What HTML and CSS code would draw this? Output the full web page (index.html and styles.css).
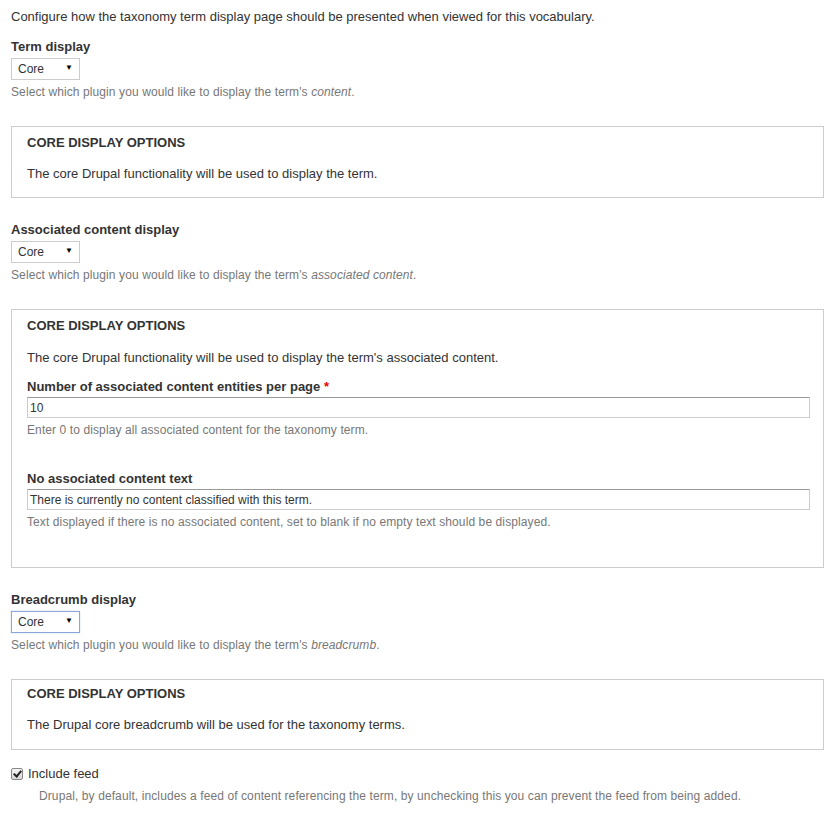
FILE: index.html
```html
<!DOCTYPE html>
<html lang="en">
<head>
  <meta charset="UTF-8" />
  <title>Taxonomy display</title>
  <link rel="stylesheet" href="styles.css">
</head>
<body>
  <div class="page">
    <p class="intro">Configure how the taxonomy term display page should be presented when viewed for this vocabulary.</p>

    <div class="form-item">
      <label for="term-display">Term display</label>
      <span class="select-wrap">
        <select id="term-display"><option>Core</option></select>
      </span>
      <div class="description">Select which plugin you would like to display the term's <em>content</em>.</div>
    </div>

    <fieldset class="fieldset">
      <div class="legend">Core display options</div>
      <p class="fieldset-text">The core Drupal functionality will be used to display the term.</p>
    </fieldset>

    <div class="form-item">
      <label for="assoc-display">Associated content display</label>
      <span class="select-wrap">
        <select id="assoc-display"><option>Core</option></select>
      </span>
      <div class="description">Select which plugin you would like to display the term's <em>associated content</em>.</div>
    </div>

    <fieldset class="fieldset fieldset-tall">
      <div class="legend">Core display options</div>
      <p class="fieldset-text">The core Drupal functionality will be used to display the term's associated content.</p>

      <div class="form-item inner">
        <label for="per-page">Number of associated content entities per page <span class="required">*</span></label>
        <input type="text" id="per-page" class="text" value="10">
        <div class="description">Enter 0 to display all associated content for the taxonomy term.</div>
      </div>

      <div class="form-item inner second">
        <label for="empty-text">No associated content text</label>
        <input type="text" id="empty-text" class="text" value="There is currently no content classified with this term.">
        <div class="description">Text displayed if there is no associated content, set to blank if no empty text should be displayed.</div>
      </div>
    </fieldset>

    <div class="form-item">
      <label for="crumb-display">Breadcrumb display</label>
      <span class="select-wrap focused">
        <select id="crumb-display"><option>Core</option></select>
      </span>
      <div class="description">Select which plugin you would like to display the term's <em>breadcrumb</em>.</div>
    </div>

    <fieldset class="fieldset fieldset-last">
      <div class="legend">Core display options</div>
      <p class="fieldset-text">The Drupal core breadcrumb will be used for the taxonomy terms.</p>
    </fieldset>

    <div class="form-item checkbox-item">
      <div class="checkbox-row">
        <input type="checkbox" id="include-feed" checked>
        <label for="include-feed">Include feed</label>
      </div>
      <div class="description">Drupal, by default, includes a feed of content referencing the term, by unchecking this you can prevent the feed from being added.</div>
    </div>
  </div>
</body>
</html>
```

FILE: styles.css
```css
body {
  margin: 0;
  padding: 0;
  background: #fff;
  color: #333;
  font-family: "Liberation Sans", Arial, sans-serif;
  font-size: 13px;
}

.page {
  padding: 0 8px 20px 11px;
}

.intro {
  margin: 0;
  padding-top: 8px;
  line-height: 18px;
}

.form-item {
  margin-top: 12px;
}

.form-item label {
  display: block;
  font-weight: bold;
  line-height: 18px;
  margin-bottom: 2px;
}

.required {
  color: #e00;
}

.select-wrap {
  position: relative;
  display: inline-block;
}

.select-wrap select {
  appearance: none;
  -webkit-appearance: none;
  width: 69px;
  height: 22px;
  margin: 0;
  padding: 0 0 0 6px;
  border: 1px solid #ccc;
  border-radius: 0;
  background: #fff;
  color: #333;
  font-family: inherit;
  font-size: 12px;
  display: block;
}

.select-wrap::after {
  content: "\25BC";
  position: absolute;
  right: 7px;
  top: 5px;
  font-size: 8px;
  color: #000;
  pointer-events: none;
}

.select-wrap.focused select {
  border-color: #8aa8d6;
  box-shadow: 0 0 1px #a9c1e6;
}

.description {
  margin-top: 4px;
  line-height: 16px;
  font-size: 12px;
  letter-spacing: 0.1px;
  color: #777;
}

.fieldset {
  margin: 26px 0 0 0;
  padding: 7px 13px 14px 15px;
  border: 1px solid #ccc;
}

.legend {
  font-weight: bold;
  text-transform: uppercase;
  line-height: 18px;
}

.fieldset-text {
  margin: 13px 0 0 0;
  line-height: 18px;
}

.fieldset + .form-item {
  margin-top: 23px;
}

.fieldset-tall .fieldset-text {
  margin-top: 14px;
}

.fieldset-tall {
  padding-bottom: 37px;
}

.fieldset-last {
  margin-top: 26px;
  padding-top: 5px;
  padding-bottom: 15px;
}

.form-item.inner {
  margin-top: 11px;
}

.form-item.inner label {
  margin-bottom: 1px;
}

.form-item.inner.second {
  margin-top: 32px;
}

.text {
  display: block;
  box-sizing: border-box;
  width: 100%;
  height: 21px;
  margin: 0;
  padding: 0 2px;
  border: 1px solid #ccc;
  border-top-color: #999;
  font-family: inherit;
  font-size: 12px;
  color: #333;
}

.fieldset + .checkbox-item {
  margin-top: 15px;
}

.checkbox-row {
  display: flex;
  align-items: center;
}

.checkbox-row input {
  appearance: none;
  -webkit-appearance: none;
  position: relative;
  width: 12px;
  height: 12px;
  margin: 0 5px 0 0;
  border: 1px solid #888;
  border-radius: 2px;
  background: linear-gradient(#f4f4f4, #d8d8d8);
}

.checkbox-row input::after {
  content: "";
  position: absolute;
  left: 3px;
  top: 0px;
  width: 3px;
  height: 6px;
  border: solid #222;
  border-width: 0 2px 2px 0;
  transform: rotate(40deg);
}

.checkbox-row label {
  font-weight: normal;
  margin: 0;
}

.checkbox-item .description {
  margin-top: 5px;
  padding-left: 28px;
}
```
